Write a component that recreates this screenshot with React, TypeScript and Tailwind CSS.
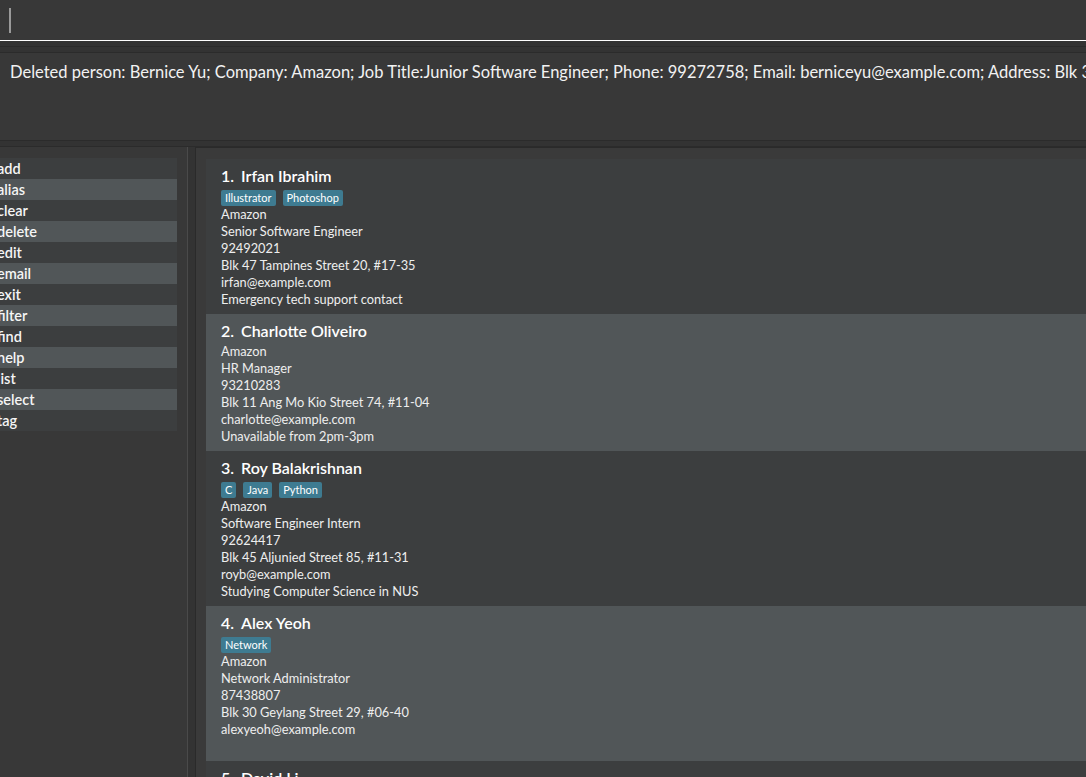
const commands = ["add", "alias", "clear", "delete", "edit", "email", "exit", "filter", "find", "help", "list", "select", "tag"]

interface Person {
  id: number
  name: string
  tags: string[]
  lines: string[]
}

const persons: Person[] = [
  {
    id: 1,
    name: "Irfan Ibrahim",
    tags: ["Illustrator", "Photoshop"],
    lines: ["Amazon", "Senior Software Engineer", "92492021", "Blk 47 Tampines Street 20, #17-35", "irfan@example.com", "Emergency tech support contact"],
  },
  {
    id: 2,
    name: "Charlotte Oliveiro",
    tags: [],
    lines: ["Amazon", "HR Manager", "93210283", "Blk 11 Ang Mo Kio Street 74, #11-04", "charlotte@example.com", "Unavailable from 2pm-3pm"],
  },
  {
    id: 3,
    name: "Roy Balakrishnan",
    tags: ["C", "Java", "Python"],
    lines: ["Amazon", "Software Engineer Intern", "92624417", "Blk 45 Aljunied Street 85, #11-31", "royb@example.com", "Studying Computer Science in NUS"],
  },
  {
    id: 4,
    name: "Alex Yeoh",
    tags: ["Network"],
    lines: ["Amazon", "Network Administrator", "87438807", "Blk 30 Geylang Street 29, #06-40", "alexyeoh@example.com", ""],
  },
  {
    id: 5,
    name: "David Li",
    tags: [],
    lines: ["Amazon", "", "", "", "", ""],
  },
]

export default function App() {
  return (
    <div className="h-[777px] w-[1086px] overflow-hidden bg-[#383838] font-['Lato','Open_Sans',sans-serif] text-white">
      {/* command box */}
      <div className="flex h-[41px] items-center border-b border-white bg-[#383838] pl-[9px]">
        <div className="h-[25px] w-[2px] bg-[#9a9a9a]" />
      </div>
      <div className="flex h-[12px] flex-col border-b border-[#2b2b2b] bg-[#333333] pt-[5px]">
        <div className="h-px bg-[#2b2b2b]" />
      </div>

      {/* result display */}
      <div className="h-[87px] overflow-hidden bg-[#383838] pl-[10px] pt-[7px] text-[16.5px] whitespace-nowrap text-[#f2f2f2]">
        Deleted person: Bernice Yu; Company: Amazon; Job Title:Junior Software Engineer; Phone: 99272758; Email: berniceyu@example.com; Address: Blk 30
      </div>
      <div className="h-[7px] border-t border-b border-[#2b2b2b] bg-[#333333]" />

      <div className="flex h-[630px]">
        {/* command list */}
        <div className="w-[187px] shrink-0 overflow-hidden bg-[#383838] pt-[11px]">
          <div className="w-[177px] overflow-hidden">
            {commands.map((c, i) => (
              <div
                key={c}
                className={`h-[21px] text-[14.5px] leading-[21px] font-semibold text-[#f5f5f5] ${i % 2 === 0 ? "bg-[#3c3e3f]" : "bg-[#515658]"}`}
              >
                <span className="-ml-[3px] inline-block">{c}</span>
              </div>
            ))}
          </div>
        </div>
        <div className="w-px bg-[#4a4a4a]" />
        <div className="w-[7px] bg-[#333333]" />

        {/* person list */}
        <div className="flex-1 overflow-hidden border-l border-t border-[#2a2a2a] bg-[#3a3a3a] pl-[10px] pt-[11px]">
          {persons.map((p, i) => (
            <div key={p.id} className={`pl-[15px] pt-[5px] pb-[6px] ${i % 2 === 0 ? "bg-[#3c3e3f]" : "bg-[#515658]"}`}>
              <div className="flex h-[23px] items-center text-[16px] font-semibold text-white">
                <span className="w-[20px]">{p.id}.</span>
                <span>{p.name}</span>
              </div>
              {p.tags.length > 0 ? (
                <div className="mt-[3px] flex gap-[7px]">
                  {p.tags.map((t) => (
                    <span key={t} className="rounded-[2px] bg-[#3e7b91] px-[4px] text-[11px] leading-[16px] text-white">
                      {t}
                    </span>
                  ))}
                </div>
              ) : (
                <div className="h-px" />
              )}
              {p.lines.map((l, j) => (
                <div key={j} className="h-[17px] text-[12.8px] leading-[17px] text-[#eeeeee]">
                  {l}
                </div>
              ))}
            </div>
          ))}
        </div>
      </div>
    </div>
  )
}
